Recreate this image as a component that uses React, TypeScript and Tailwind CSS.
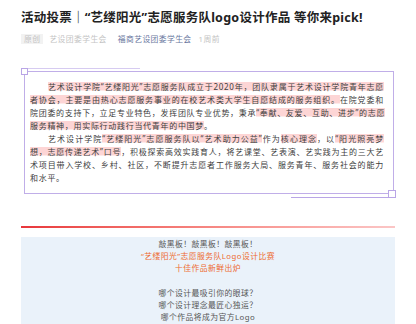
import React from 'react';

const hl =
  'bg-[linear-gradient(#fdd5d5,#fdd5d5)] bg-no-repeat bg-center bg-[length:100%_8.5px]';

const line = 'whitespace-nowrap text-justify [text-align-last:justify]';

export default function App() {
  return (
    <div className="w-[416px] h-[324px] overflow-hidden bg-white px-[21px] pt-[10px] font-['Noto_Sans','Noto_Sans_CJK_SC',sans-serif]">
      <h1 className="text-[12.5px] leading-[16px] font-bold tracking-[0.25px] text-[#222]">
        活动投票｜“艺缕阳光”志愿服务队logo设计作品 等你来pick!
      </h1>

      <div className="mt-[8px] flex items-center text-[7.8px] leading-[10px] tracking-[0.4px]">
        <span className="bg-[#f2f2f2] px-[3px] text-[#c4c4c4]">原创</span>
        <span className="ml-[6px] text-[#c4c4c4]">艺设团委学生会</span>
        <span className="ml-[11px] text-[#6a78a0]">福商艺设团委学生会</span>
        <span className="ml-[7px] text-[#c4c4c4]">1周前</span>
      </div>

      <div className="relative mt-[24px] pt-[3px] pb-[4px]">
        <div className="absolute left-0 top-0 h-px w-[119px] bg-[#d6cbf1]" />
        <div className="absolute left-0 top-0 h-[7px] w-[7px] border border-[#b9a5e6] bg-white" />
        <div className="ml-[3px] mr-[1px] border border-[#c0aee8] pt-[8px] pb-[9px] pl-[5px] pr-[9px] text-[8px] leading-[13px] tracking-[0.7px] text-[#404040]">
          <div className={line + ' pl-[18px]'}>
            <span className={hl}>艺术设计学院“艺缕阳光”志愿服务队成立于2020年，团队隶属于艺术设计学院青年志愿</span>
          </div>
          <div className={line}>
            <span className={hl}>者协会，主要是由热心志愿服务事业的在校艺术类大学生自愿结成的服务组织。</span>在院党委和
          </div>
          <div className={line}>
            院团委的支持下，立足专业特色，发挥团队专业优势，秉承<span className={hl}>“奉献、友爱、互助、进步”的志愿</span>
          </div>
          <div className="whitespace-nowrap">
            <span className={hl}>服务精神，用实际行动践行当代青年的中国梦</span>。
          </div>
          <div className={line + ' pl-[18px]'}>
            艺术设计学院<span className={hl}>“艺缕阳光”志愿服务队以“艺术助力公益”</span>作为<span className={hl}>核心理念</span>，以<span className={hl}>“阳光照亮梦</span>
          </div>
          <div className={line}>
            <span className={hl}>想，志愿传递艺术”口号</span>，积极探索高效实践育人，将艺课堂、艺表演、艺实践为主的三大艺
          </div>
          <div className={line}>
            术项目带入学校、乡村、社区，不断提升志愿者工作服务大局、服务青年、服务社会的能力
          </div>
          <div className="whitespace-nowrap">和水平。</div>
        </div>
        <div className="absolute bottom-0 right-0 h-px w-[104px] bg-[#b9a5e6]" />
        <div className="absolute bottom-0 right-[-1px] h-[8px] w-[8px] border border-[#b9a5e6] bg-white" />
      </div>

      <div className="mt-[28px] h-[1.5px] bg-gradient-to-r from-[#e8353b] to-[#fbc6c6]" />

      <div className="mt-[9px] bg-[#eaf2fa] pt-[1px] pb-[6px] text-center text-[7.8px] leading-[12.3px] tracking-[0.45px] text-[#555]">
        <p>敲黑板！敲黑板！敲黑板！</p>
        <p className="text-[#ee6a30]">“艺缕阳光”志愿服务队Logo设计比赛</p>
        <p className="text-[#ee6a30]">十佳作品新鲜出炉</p>
        <p>&nbsp;</p>
        <p>哪个设计最吸引你的眼球？</p>
        <p>哪个设计理念最匠心独运？</p>
        <p>哪个作品将成为官方Logo</p>
      </div>
    </div>
  );
}
